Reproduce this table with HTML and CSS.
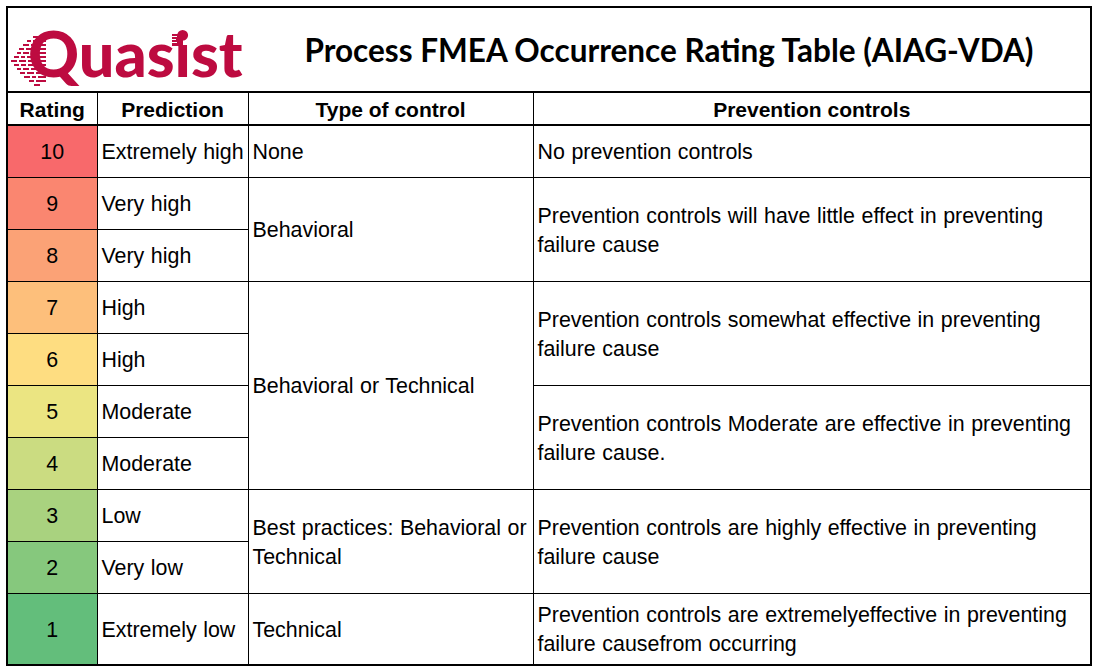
FILE: index.html
```html
<!DOCTYPE html>
<html lang="en">
<head>
<meta charset="utf-8">
<title>Process FMEA Occurrence Rating Table (AIAG-VDA)</title>
<link rel="stylesheet" href="styles.css">
</head>
<body>
<table class="fmea">
  <colgroup>
    <col class="c-rating">
    <col class="c-pred">
    <col class="c-type">
    <col class="c-prev">
  </colgroup>
  <thead>
    <tr class="title-row">
      <th colspan="2" class="logo-cell">
        <div class="logo">
          <span class="logo-text">Quasist</span>
          <svg class="logo-lines" width="40" height="56" viewBox="0 0 40 56" aria-hidden="true">
            <g fill="#bd0b40">
              <rect x="22" y="2" width="5" height="2"/><rect x="29" y="2" width="5" height="2"/>
              <rect x="16" y="6" width="4" height="2"/><rect x="22" y="6" width="6" height="2"/><rect x="30" y="6" width="5" height="2"/>
              <rect x="12" y="10" width="6" height="2"/><rect x="20" y="10" width="5" height="2"/><rect x="27" y="10" width="8" height="2"/>
              <rect x="8" y="14" width="5" height="2"/><rect x="15" y="14" width="8" height="2"/><rect x="25" y="14" width="10" height="2"/>
              <rect x="6" y="18" width="4" height="2"/><rect x="12" y="18" width="6" height="2"/><rect x="20" y="18" width="15" height="2"/>
              <rect x="3" y="22" width="5" height="2"/><rect x="10" y="22" width="4" height="2"/><rect x="16" y="22" width="19" height="2"/>
              <rect x="0" y="26" width="6" height="2"/><rect x="8" y="26" width="7" height="2"/><rect x="17" y="26" width="18" height="2"/>
              <rect x="3" y="30" width="5" height="2"/><rect x="10" y="30" width="5" height="2"/><rect x="17" y="30" width="18" height="2"/>
              <rect x="6" y="34" width="4" height="2"/><rect x="12" y="34" width="6" height="2"/><rect x="20" y="34" width="15" height="2"/>
              <rect x="9" y="38" width="5" height="2"/><rect x="16" y="38" width="7" height="2"/><rect x="25" y="38" width="10" height="2"/>
              <rect x="13" y="42" width="6" height="2"/><rect x="21" y="42" width="4" height="2"/><rect x="27" y="42" width="8" height="2"/>
              <rect x="18" y="46" width="5" height="2"/><rect x="25" y="46" width="10" height="2"/>
              <rect x="23" y="50" width="6" height="2"/>
            </g>
          </svg>
          <svg class="logo-dot" width="11" height="12" viewBox="0 0 11 12" aria-hidden="true">
            <rect x="0" y="0" width="11" height="12" fill="#bd0b40"/>
            <g fill="#fff">
              <rect x="0" y="2" width="5" height="1"/>
              <rect x="0" y="5" width="4" height="1"/>
              <rect x="0" y="8" width="5" height="1"/>
            </g>
          </svg>
        </div>
      </th>
      <th colspan="2" class="title-cell">Process FMEA Occurrence Rating Table (AIAG-VDA)</th>
    </tr>
    <tr class="head-row">
      <th>Rating</th>
      <th>Prediction</th>
      <th>Type of control</th>
      <th>Prevention controls</th>
    </tr>
  </thead>
  <tbody>
    <tr class="row">
      <td class="rating r10">10</td>
      <td class="pred">Extremely high</td>
      <td>None</td>
      <td>No prevention controls</td>
    </tr>
    <tr class="row">
      <td class="rating r9">9</td>
      <td class="pred">Very high</td>
      <td rowspan="2">Behavioral</td>
      <td rowspan="2">Prevention controls will have little effect in preventing failure cause</td>
    </tr>
    <tr class="row">
      <td class="rating r8">8</td>
      <td class="pred">Very high</td>
    </tr>
    <tr class="row">
      <td class="rating r7">7</td>
      <td class="pred">High</td>
      <td rowspan="4">Behavioral or Technical</td>
      <td rowspan="2">Prevention controls somewhat effective in preventing failure cause</td>
    </tr>
    <tr class="row">
      <td class="rating r6">6</td>
      <td class="pred">High</td>
    </tr>
    <tr class="row">
      <td class="rating r5">5</td>
      <td class="pred">Moderate</td>
      <td rowspan="2">Prevention controls Moderate are effective in preventing failure cause.</td>
    </tr>
    <tr class="row">
      <td class="rating r4">4</td>
      <td class="pred">Moderate</td>
    </tr>
    <tr class="row">
      <td class="rating r3">3</td>
      <td class="pred">Low</td>
      <td rowspan="2">Best practices: Behavioral or Technical</td>
      <td rowspan="2">Prevention controls are highly effective in preventing failure cause</td>
    </tr>
    <tr class="row">
      <td class="rating r2">2</td>
      <td class="pred">Very low</td>
    </tr>
    <tr class="row last">
      <td class="rating r1">1</td>
      <td class="pred">Extremely low</td>
      <td>Technical</td>
      <td>Prevention controls are extremelyeffective in preventing failure causefrom occurring</td>
    </tr>
  </tbody>
</table>
</body>
</html>
```
FILE: styles.css
```css
html, body {
  margin: 0;
  padding: 0;
  background: #ffffff;
}
body {
  padding: 6px;
  font-family: "Liberation Sans", Arial, sans-serif;
  color: #000;
}
.fmea {
  border-collapse: collapse;
  table-layout: fixed;
  width: 1086px;
  border: 2px solid #000;
  font-size: 21.4px;
  word-spacing: 0.6px;
}
.c-rating { width: 90px; }
.c-pred { width: 151px; }
.c-type { width: 285px; }
.c-prev { width: auto; }

.fmea td, .fmea th {
  border: 1px solid #000;
  padding: 2px 4px 0;
  vertical-align: middle;
  text-align: left;
  line-height: 29px;
}
.fmea td.pred {
  white-space: nowrap;
  padding-right: 0;
  overflow: visible;
}
.title-row th {
  height: 83px;
  border-bottom: 2px solid #000;
  padding: 0;
}
.title-row .logo-cell { border-right: none; }
.title-row .title-cell {
  border-left: none;
  text-align: center;
  font-family: "Lato", "Open Sans", sans-serif;
  font-weight: 700;
  font-size: 31.5px;
  line-height: 40px;
  word-spacing: 0;
}
.logo {
  position: relative;
  height: 70px;
  width: 240px;
}
.logo-text {
  position: absolute;
  left: 20px;
  top: -2px;
  font-family: "Lato", sans-serif;
  font-weight: 900;
  font-size: 63px;
  line-height: 80px;
  color: #bd0b40;
  word-spacing: 0;
}
.logo-lines {
  position: absolute;
  left: 3px;
  top: 19px;
}
.logo-dot {
  position: absolute;
  left: 164px;
  top: 19px;
}
.head-row th {
  height: 30px;
  text-align: center;
  font-weight: 700;
  font-size: 21px;
  word-spacing: 0;
  border-bottom: 2px solid #000;
  padding: 1px 0 0;
}
.row td { height: 49px; }
.row.last td { height: 68px; }
.fmea td.rating {
  text-align: center;
  padding: 2px 0 0;
}
.r10 { background: #f8696b; }
.r9 { background: #fa8670; }
.r8 { background: #fba276; }
.r7 { background: #fdbf7b; }
.r6 { background: #fedd81; }
.r5 { background: #ebe582; }
.r4 { background: #cbdc81; }
.r3 { background: #a9d27f; }
.r2 { background: #86c87d; }
.r1 { background: #63be7b; }
```
